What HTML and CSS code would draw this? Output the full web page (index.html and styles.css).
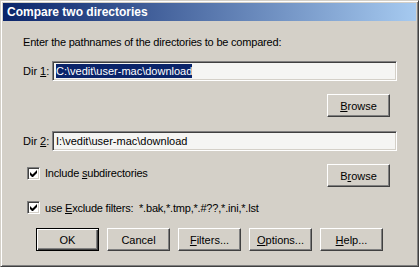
FILE: index.html
```html
<!DOCTYPE html>
<html lang="en">
<head>
    <meta charset="UTF-8">
    <title>Compare two directories</title>
    <link rel="stylesheet" href="styles.css">
</head>
<body>
    <div class="window">
        <div class="titlebar">Compare two directories</div>
        <div class="content">
            <p class="prompt">Enter the pathnames of the directories to be compared:</p>

            <div class="dir-row">
                <label class="dir-label">Dir <u>1</u>:</label>
                <div class="field"><span class="selected">C:\vedit\user-mac\download</span></div>
            </div>
            <div class="browse-row">
                <button class="btn browse"><u>B</u>rowse</button>
            </div>

            <div class="dir-row dir-two">
                <label class="dir-label">Dir <u>2</u>:</label>
                <div class="field">I:\vedit\user-mac\download</div>
            </div>

            <div class="check-row include">
                <span class="checkbox">
                    <svg width="7" height="7" viewBox="0 0 7 7"><path d="M0 2v3l2 2h1l4-4V0L2.5 4.5z" fill="#000"/></svg>
                </span>
                <span class="check-text">Include <u>s</u>ubdirectories</span>
                <button class="btn browse">B<u>r</u>owse</button>
            </div>

            <div class="check-row exclude">
                <span class="checkbox">
                    <svg width="7" height="7" viewBox="0 0 7 7"><path d="M0 2v3l2 2h1l4-4V0L2.5 4.5z" fill="#000"/></svg>
                </span>
                <span class="check-text">use <u>E</u>xclude filters:&nbsp; *.bak,*.tmp,*.#??,*.ini,*.lst</span>
            </div>

            <div class="actions">
                <button class="btn default">OK</button>
                <button class="btn">Cancel</button>
                <button class="btn"><u>F</u>ilters...</button>
                <button class="btn"><u>O</u>ptions...</button>
                <button class="btn"><u>H</u>elp...</button>
            </div>
        </div>
    </div>
</body>
</html>
```

FILE: styles.css
```css
body,p{
    margin: 0;
    padding: 0;
}
body{
    background: #d4d0c8;
    font-family: "Liberation Sans", Arial, sans-serif;
    font-size: 11px;
    color: #000;
}
.window{
    width: 419px;
    height: 267px;
    box-sizing: border-box;
    border: 1px solid;
    border-color: #d4d0c8 #404040 #404040 #d4d0c8;
    box-shadow: inset 1px 1px #fff, inset -1px -1px #808080;
    padding: 2px;
    background: #d4d0c8;
}
.titlebar{
    height: 18px;
    line-height: 18px;
    padding-left: 4px;
    background: linear-gradient(to right, #0a246a, #a6caf0);
    color: #fff;
    font-weight: bold;
    font-size: 12px;
    font-family: "Liberation Sans", Arial, sans-serif;
}
.content{
    padding: 15px 19px 0 20px;
}
.prompt{
    line-height: 13px;
    letter-spacing: -0.2px;
}
.dir-row{
    display: flex;
    align-items: center;
    margin-top: 12px;
}
.dir-label{
    width: 29px;
    flex-shrink: 0;
}
.field{
    flex: 1;
    height: 20px;
    box-sizing: border-box;
    border: 1px solid;
    border-color: #808080 #fff #fff #808080;
    box-shadow: inset 1px 1px #404040, inset -1px -1px #d4d0c8;
    background: #f5f5f3;
    padding: 3px 0 0 3px;
    line-height: 13px;
    white-space: nowrap;
}
.selected{
    background: #0a246a;
    color: #fff;
    padding: 1px 0 1px;
}
.browse-row{
    display: flex;
    justify-content: flex-end;
    padding-right: 7px;
    margin-top: 13px;
}
.dir-two{
    margin-top: 14px;
}
.btn{
    width: 63px;
    height: 23px;
    box-sizing: border-box;
    border: 1px solid;
    border-color: #fff #404040 #404040 #fff;
    box-shadow: inset -1px -1px #808080;
    background: #d4d0c8;
    font-family: "Liberation Sans", Arial, sans-serif;
    font-size: 11px;
    color: #000;
    padding: 0;
}
.btn.default{
    border: 1px solid #000;
    box-shadow: inset 1px 1px #fff, inset -1px -1px #404040, inset -2px -2px #808080;
}
.check-row{
    display: flex;
    align-items: center;
    padding-left: 4px;
}
.include{
    margin-top: 13px;
    padding-right: 7px;
}
.exclude{
    margin-top: 14px;
}
.checkbox{
    width: 13px;
    height: 13px;
    box-sizing: border-box;
    border: 1px solid;
    border-color: #808080 #fff #fff #808080;
    box-shadow: inset 1px 1px #404040, inset -1px -1px #d4d0c8;
    background: #fff;
    display: flex;
    align-items: center;
    justify-content: center;
    flex-shrink: 0;
    margin-top: -5px;
}
.exclude .checkbox{
    margin-top: 0;
}
.check-text{
    margin-left: 5px;
    flex: 1;
    white-space: pre;
    letter-spacing: -0.2px;
}
.include .check-text{
    margin-top: -6px;
}
.actions{
    display: flex;
    gap: 8px;
    padding-left: 13px;
    margin-top: 14px;
}
```
